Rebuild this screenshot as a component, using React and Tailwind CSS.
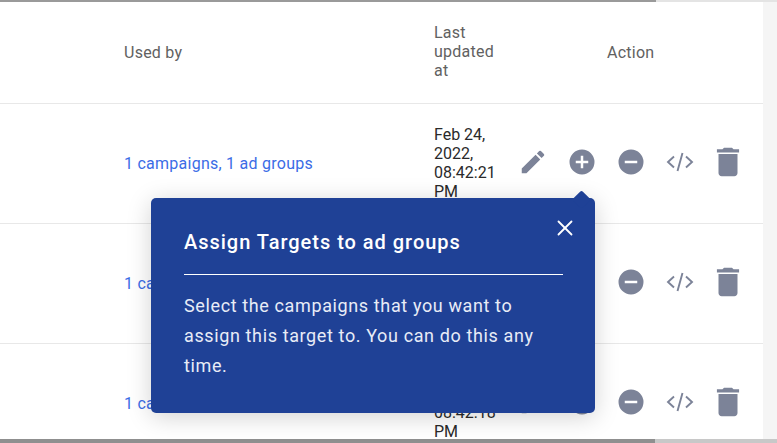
import { X } from 'lucide-react';

const rows = [
  { label: '1 campaigns, 1 ad groups', time: '08:42:21' },
  { label: '1 campaigns, 1 ad groups', time: '08:42:20' },
  { label: '1 campaigns, 1 ad groups', time: '08:42:18' },
];

function EditIcon() {
  return (
    <svg viewBox="0 0 24 24" className="w-[30px] h-[30px] fill-[#7c8398]">
      <path d="M3 17.25V21h3.75L17.81 9.94l-3.75-3.75L3 17.25zM20.71 7.04a1 1 0 0 0 0-1.41l-2.34-2.34a1 1 0 0 0-1.41 0l-1.83 1.83 3.75 3.75 1.83-1.83z" />
    </svg>
  );
}

function AddIcon() {
  return (
    <svg viewBox="0 0 24 24" className="w-[30px] h-[30px] fill-[#7c8398]">
      <path d="M12 2a10 10 0 1 0 0 20 10 10 0 0 0 0-20zm5 11h-4v4h-2v-4H7v-2h4V7h2v4h4v2z" />
    </svg>
  );
}

function RemoveIcon() {
  return (
    <svg viewBox="0 0 24 24" className="w-[30px] h-[30px] fill-[#7c8398]">
      <path d="M12 2a10 10 0 1 0 0 20 10 10 0 0 0 0-20zm5 11H7v-2h10v2z" />
    </svg>
  );
}

function CodeIcon() {
  return (
    <svg viewBox="0 0 30 30" className="w-[30px] h-[30px] fill-none stroke-[#7c8398] stroke-[1.9]">
      <path d="M9 9.5 3 15l6 5.5M21 9.5l6 5.5-6 5.5M17.5 6l-5 18" />
    </svg>
  );
}

function TrashIcon() {
  return (
    <svg viewBox="0 0 24 24" className="w-[38px] h-[38px] -ml-[5px] fill-[#7c8398]">
      <path d="M6 19c0 1.1.9 2 2 2h8c1.1 0 2-.9 2-2V7H6v12zM19 4h-3.5l-1-1h-5l-1 1H5v2h14V4z" />
    </svg>
  );
}

function Row({ row }) {
  return (
    <div className="h-[120px] flex items-center border-b border-[#e8e8e8] last:border-b-0 overflow-hidden">
      <div className="w-[434px] pl-[124px] shrink-0 text-[#3b6ce6] text-[16px] tracking-[0.25px]">{row.label}</div>
      <div className="w-[84px] shrink-0 mb-[2px] text-[#2a2a2a] text-[16px] leading-[19px]">
        Feb 24,<br />2022,<br />{row.time}<br />PM
      </div>
      <div className="flex items-center gap-[19px] mb-[4px]">
        <EditIcon />
        <AddIcon />
        <RemoveIcon />
        <CodeIcon />
        <TrashIcon />
      </div>
    </div>
  );
}

export default function App() {
  return (
    <div className="relative w-[777px] h-[443px] overflow-hidden bg-[#f5f5f5] font-['Roboto',sans-serif]">
      <div className="flex h-[2px]">
        <div className="w-[656px] bg-[#9a9a9a]" />
        <div className="flex-1 bg-[#e4e4e4]" />
      </div>
      <div className="w-[763px] bg-white">
        <div className="h-[102px] flex items-center border-b border-[#e8e8e8] text-[#616161] text-[16px] tracking-[0.25px]">
          <div className="w-[434px] pl-[124px] shrink-0">Used by</div>
          <div className="w-[173px] shrink-0 mb-[2px] leading-[19px]">Last<br />updated<br />at</div>
          <div>Action</div>
        </div>
        {rows.map((row, i) => <Row key={i} row={row} />)}
      </div>

      {/* bottom scrollbar */}
      <div className="absolute left-0 bottom-0 w-full h-[4px] flex">
        <div className="w-[655px] bg-[#8f8f8f]" />
        <div className="flex-1 bg-[#c8c8c8]" />
      </div>

      {/* onboarding popover */}
      <div className="absolute left-[151px] top-[198px] w-[444px] h-[215px] bg-[#1f4196] rounded-[5px] shadow-[0_4px_24px_rgba(0,0,0,0.18)] pl-[33px] pr-[32px] pt-[32px] text-white">
        <div className="absolute left-[424px] -top-[5px] w-[13px] h-[13px] bg-[#1f4196] rotate-45 rounded-[2px]" />
        <X className="absolute right-[17px] top-[17px] w-[26px] h-[26px]" strokeWidth={1.7} />
        <div className="text-[20px] font-medium tracking-[0.98px] leading-[24px] pb-[20px] border-b border-white">Assign Targets to ad groups</div>
        <p className="mt-[16px] text-[18px] leading-[30px] tracking-[0.62px] text-[#e8ecf7]">
          Select the campaigns that you want to assign this target to. You can do this any time.
        </p>
      </div>
    </div>
  );
}
